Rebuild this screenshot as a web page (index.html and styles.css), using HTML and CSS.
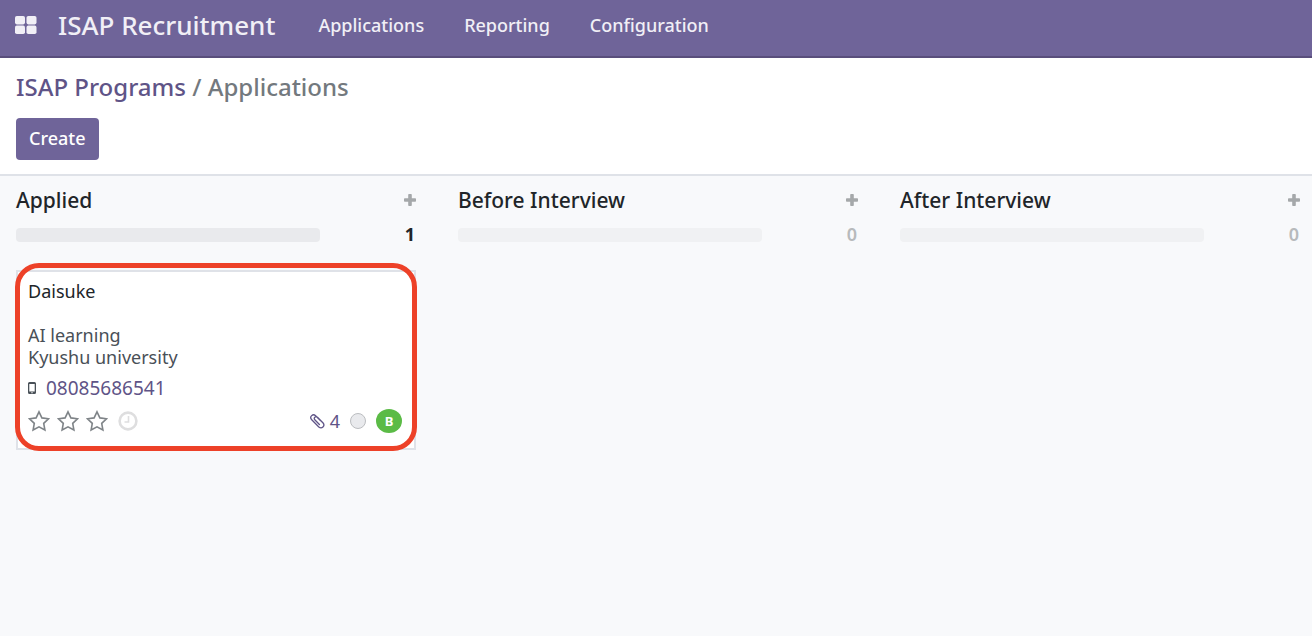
FILE: index.html
```html
<!DOCTYPE html>
<html lang="en">
<head>
<meta charset="utf-8">
<title>ISAP Recruitment</title>
<link rel="stylesheet" href="styles.css">
</head>
<body>
<svg class="defs" aria-hidden="true">
  <symbol id="plus" viewBox="0 0 12 12"><path d="M5 0h2q.8 0 .8.8v3.500h3.400q.8 0 .8.8v1.800q0 .8-.8.8H7.800v3.500q0 .8-.8.8H5q-.8 0-.8-.8V7.700H.8Q0 7.700 0 6.900V5.100q0-.8.8-.8h3.400V.8Q4.200 0 5 0z"/></symbol>
  <symbol id="star" viewBox="0 0 22 22"><path d="M11 1.800l2.900 6.100 6.600.9-4.800 4.600 1.200 6.600-5.900-3.200L5.100 20l1.200-6.600L1.500 8.800l6.600-.9z" fill="none" stroke="currentColor" stroke-width="1.600" stroke-linejoin="miter"/></symbol>
</svg>
<header class="navbar">
  <button class="apps" type="button" aria-label="Apps">
    <svg width="22" height="18" viewBox="0 0 22 18"><rect width="10" height="8.400" rx="1.800"/><rect x="11.500" width="10" height="8.400" rx="1.800"/><rect y="9.600" width="10" height="8.400" rx="1.800"/><rect x="11.500" y="9.600" width="10" height="8.400" rx="1.800"/></svg>
  </button>
  <a class="brand" href="#">ISAP Recruitment</a>
  <nav class="menu">
    <a href="#">Applications</a>
    <a href="#">Reporting</a>
    <a href="#">Configuration</a>
  </nav>
</header>
<section class="control-panel">
  <div class="breadcrumb"><a href="#">ISAP Programs</a> <span>/</span> <span>Applications</span></div>
  <button class="create" type="button">Create</button>
</section>
<main class="board">
  <section class="column">
    <div class="column-head"><h2>Applied</h2><button class="add" type="button" aria-label="Add to Applied"><svg width="12" height="12"><use href="#plus"/></svg></button></div>
    <div class="counter"><div class="bar"></div><b class="count">1</b></div>
    <article class="card">
      <h3>Daisuke</h3>
      <p>AI learning<br>Kyushu university</p>
      <div class="phone">
        <svg width="8" height="12" viewBox="0 0 8 12"><path fill-rule="evenodd" d="M1.500 0h5Q8 0 8 1.500v9Q8 12 6.500 12h-5Q0 12 0 10.500v-9Q0 0 1.500 0zM1.300 2v7.500h5.400V2zM3.300 10.200v1h1.400v-1z"/></svg>
        <a href="#">08085686541</a>
      </div>
      <div class="card-foot">
        <div class="stars">
          <button type="button" aria-label="Good"><svg width="22" height="22"><use href="#star"/></svg></button>
          <button type="button" aria-label="Very good"><svg width="22" height="22"><use href="#star"/></svg></button>
          <button type="button" aria-label="Excellent"><svg width="22" height="22"><use href="#star"/></svg></button>
        </div>
        <button class="clock" type="button" aria-label="Activities"><svg width="20" height="20" viewBox="0 0 20 20"><circle cx="10" cy="10" r="8.400" fill="none" stroke="currentColor" stroke-width="2.600"/><path d="M10.500 5v6H6.500" fill="none" stroke="currentColor" stroke-width="1.600"/></svg></button>
        <a class="files" href="#" aria-label="4 documents"><svg width="15" height="16" viewBox="0 0 15 16"><path d="M10.400 7.600L5.600 2.700C2.900.2-.8 3.700 1.500 6.500l7.300 7.400c3 2.500 6.600-1.100 4.300-3.900L7.500 4.300C5.500 2.700 3.300 4.900 4.800 6.800l4.600 4.700" fill="none" stroke="currentColor" stroke-width="1.300" stroke-linecap="round"/></svg>4</a>
        <button class="state" type="button" aria-label="Status"></button>
        <span class="avatar">B</span>
      </div>
      <div class="highlight"></div>
    </article>
  </section>
  <section class="column">
    <div class="column-head"><h2>Before Interview</h2><button class="add" type="button" aria-label="Add to Before Interview"><svg width="12" height="12"><use href="#plus"/></svg></button></div>
    <div class="counter empty"><div class="bar"></div><b class="count">0</b></div>
  </section>
  <section class="column">
    <div class="column-head"><h2>After Interview</h2><button class="add" type="button" aria-label="Add to After Interview"><svg width="12" height="12"><use href="#plus"/></svg></button></div>
    <div class="counter empty"><div class="bar"></div><b class="count">0</b></div>
  </section>
</main>
</body>
</html>
```
FILE: styles.css
```css
* { box-sizing: border-box; }
body { margin: 0; min-height: 100vh; background: #f8f9fb; color: #212529; font: 18px/22px "Noto Sans", "Open Sans", sans-serif; }
a { color: #5f5487; text-decoration: none; }
button { display: flex; align-items: center; justify-content: center; margin: 0; padding: 0; border: 0; background: none; color: inherit; font: inherit; cursor: pointer; }
svg { display: block; fill: currentColor; }
h2, h3, p { margin: 0; }
.defs { position: absolute; width: 0; height: 0; }

.navbar { display: flex; align-items: center; height: 58px; padding: 0 15px 7px; background: #6f6499; border-bottom: 2px solid #594e7c; color: #f1eff6; font-weight: 500; }
.navbar a { color: inherit; }
.brand { margin-left: 21px; font-size: 26px; line-height: 36px; }
.menu { display: flex; gap: 40px; margin-left: 43px; padding-top: 1px; }

.control-panel { padding: 13px 16px 14px; background: #fff; border-bottom: 2px solid #dfe2e8; font-weight: 500; }
.breadcrumb { margin-bottom: 15px; color: #73797e; font-size: 24px; line-height: 32px; }
.create { height: 42px; padding: 0 13px 3px; border-radius: 4px; background: #6f6499; color: #fff; }

.board { display: grid; grid-template-columns: repeat(3, minmax(0, 1fr)); gap: 42px; padding: 8px 12px 0 16px; }
.column-head { display: flex; align-items: center; justify-content: space-between; height: 32px; }
.column-head h2 { font-size: 21px; font-weight: 500; line-height: 32px; }
.add { width: 12px; height: 32px; color: #a5a8aa; }
.counter { display: flex; align-items: center; justify-content: space-between; height: 22px; margin-top: 7px; }
.bar { width: 76%; height: 14px; margin-top: 2px; border-radius: 4px; background: #e9eaed; }
.empty .bar { background: #f0f1f3; }
.count { width: 12px; text-align: center; font-weight: 700; }
.empty .count { color: #b7babc; font-weight: 600; }

.card { position: relative; margin-top: 25px; padding: 7px 12px 13px 10px; border: 2px solid #dfe2e8; background: #fff; }
.card h3 { font-size: 18px; font-weight: 400; line-height: 24px; }
.card p { margin-top: 21px; color: #495057; }
.phone { display: flex; align-items: center; gap: 10px; margin-top: 9px; color: #495057; font-size: 19px; }
.card-foot { display: flex; align-items: center; height: 28px; margin-top: 8px; }
.stars { display: flex; gap: 7px; color: #7f8488; }
.clock { margin-left: 10px; color: #dededf; }
.files { display: flex; align-items: center; gap: 5px; margin-left: auto; }
.state { width: 16px; height: 16px; margin: 0 10px; border: 1px solid #bbbdc0; border-radius: 50%; background: #e9eaed; }
.avatar { width: 26px; height: 24px; border-radius: 50%; background: #5bbb46; color: #fff; font-size: 13px; font-weight: 700; line-height: 24px; text-align: center; }
.highlight { position: absolute; inset: -9px -3px -3px; border: 5px solid #ed4128; border-radius: 24px; pointer-events: none; }
```
